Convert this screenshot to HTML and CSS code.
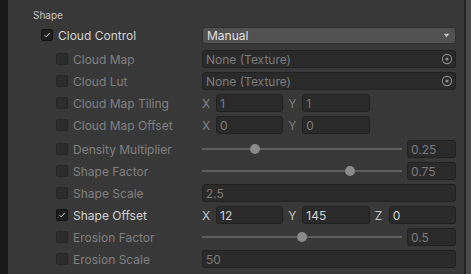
FILE: index.html
```html
<!DOCTYPE html>
<html lang="en">
<head>
  <meta charset="UTF-8" />
  <title>Shape - Inspector</title>
  <link rel="stylesheet" href="styles.css">
</head>
<body>
  <div class="inspector">
    <div class="gutter"></div>

    <div class="content">
      <div class="section-title">Shape</div>

      <div class="row row-top">
        <div class="label">
          <span class="check checked"><svg viewBox="0 0 12 12"><path d="M3 6.2 L5.1 8.3 L9.2 3.6" /></svg></span>
          <span class="name">Cloud Control</span>
        </div>
        <div class="dropdown">
          <span>Manual</span>
          <svg class="arrow" viewBox="0 0 8 6"><path d="M0.5 1 L7.5 1 L4 5 Z" /></svg>
        </div>
      </div>

      <div class="row sub off">
        <div class="label"><span class="check"></span><span class="name">Cloud Map</span></div>
        <div class="field object">
          <span>None (Texture)</span>
          <svg class="picker" viewBox="0 0 12 12"><circle cx="6" cy="6" r="4.6" /><circle class="dot" cx="6" cy="6" r="1.6" /></svg>
        </div>
      </div>

      <div class="row sub off">
        <div class="label"><span class="check"></span><span class="name">Cloud Lut</span></div>
        <div class="field object">
          <span>None (Texture)</span>
          <svg class="picker" viewBox="0 0 12 12"><circle cx="6" cy="6" r="4.6" /><circle class="dot" cx="6" cy="6" r="1.6" /></svg>
        </div>
      </div>

      <div class="row sub off">
        <div class="label"><span class="check"></span><span class="name">Cloud Map Tiling</span></div>
        <div class="vector">
          <div class="comp"><span class="axis">X</span><span class="field">1</span></div>
          <div class="comp"><span class="axis">Y</span><span class="field">1</span></div>
        </div>
      </div>

      <div class="row sub off row-gap">
        <div class="label"><span class="check"></span><span class="name">Cloud Map Offset</span></div>
        <div class="vector">
          <div class="comp"><span class="axis">X</span><span class="field">0</span></div>
          <div class="comp"><span class="axis">Y</span><span class="field">0</span></div>
        </div>
      </div>

      <div class="row sub off">
        <div class="label"><span class="check"></span><span class="name">Density Multiplier</span></div>
        <div class="slider">
          <div class="track"><span class="thumb" style="left: calc((100% - 10px) * 0.25)"></span></div>
          <span class="field num">0.25</span>
        </div>
      </div>

      <div class="row sub off">
        <div class="label"><span class="check"></span><span class="name">Shape Factor</span></div>
        <div class="slider">
          <div class="track"><span class="thumb" style="left: calc((100% - 10px) * 0.75)"></span></div>
          <span class="field num">0.75</span>
        </div>
      </div>

      <div class="row sub off">
        <div class="label"><span class="check"></span><span class="name">Shape Scale</span></div>
        <span class="field">2.5</span>
      </div>

      <div class="row sub">
        <div class="label">
          <span class="check checked"><svg viewBox="0 0 12 12"><path d="M3 6.2 L5.1 8.3 L9.2 3.6" /></svg></span>
          <span class="name">Shape Offset</span>
        </div>
        <div class="vector">
          <div class="comp"><span class="axis">X</span><span class="field">12</span></div>
          <div class="comp"><span class="axis">Y</span><span class="field">145</span></div>
          <div class="comp"><span class="axis">Z</span><span class="field">0</span></div>
        </div>
      </div>

      <div class="row sub off">
        <div class="label"><span class="check"></span><span class="name">Erosion Factor</span></div>
        <div class="slider">
          <div class="track"><span class="thumb" style="left: calc((100% - 10px) * 0.5)"></span></div>
          <span class="field num">0.5</span>
        </div>
      </div>

      <div class="row sub off">
        <div class="label"><span class="check"></span><span class="name">Erosion Scale</span></div>
        <span class="field">50</span>
      </div>
    </div>

    <div class="scrollbar"></div>
  </div>
</body>
</html>
```

FILE: styles.css
```css
* {
  margin: 0;
  padding: 0;
  box-sizing: border-box;
}

body {
  font-family: Inter, 'Noto Sans', sans-serif;
  font-size: 12px;
  color: #d2d2d2;
  background: #383838;
  overflow: hidden;
}

.inspector {
  display: flex;
  width: 471px;
  height: 274px;
}

.gutter {
  width: 8px;
  background: #191919;
}

.content {
  flex: 1;
  padding: 8px 8px 0 0;
}

.scrollbar {
  width: 7px;
  background: #4a4a4a;
  border-left: 2px solid #232323;
}

.section-title {
  font-size: 10px;
  color: #c4c4c4;
  padding-left: 25px;
  height: 14px;
  line-height: 14px;
  margin-bottom: 4px;
}

.row {
  display: flex;
  align-items: center;
  height: 18px;
  margin-bottom: 4px;
}

.row-top {
  margin-bottom: 6px;
}

.row-gap {
  margin-bottom: 6px;
}

.label {
  width: 194px;
  display: flex;
  align-items: center;
  gap: 5px;
  padding-left: 33px;
  white-space: nowrap;
}

.sub .label {
  padding-left: 48px;
}

.off .name {
  color: #808080;
}

.check {
  width: 12px;
  height: 12px;
  border-radius: 2px;
  background: #2c2c2c;
  border: 1px solid #262626;
  display: flex;
  align-items: center;
  justify-content: center;
}

.check.checked {
  background: #1e1e1e;
  border-color: #111111;
}

.check svg {
  width: 12px;
  height: 12px;
}

.check path {
  fill: none;
  stroke: #d2d2d2;
  stroke-width: 1.2;
}

.dropdown {
  flex: 1;
  height: 17px;
  background: #515151;
  border: 1px solid #303030;
  border-radius: 3px;
  display: flex;
  align-items: center;
  justify-content: space-between;
  padding: 0 5px 0 4px;
  color: #e0e0e0;
}

.arrow {
  width: 7px;
  height: 5px;
  fill: #c4c4c4;
}

.field {
  flex: 1;
  height: 18px;
  background: #2a2a2a;
  border: 1px solid #212121;
  border-radius: 3px;
  display: flex;
  align-items: center;
  padding: 0 3px;
  color: #d2d2d2;
  white-space: nowrap;
}

.row.off .field {
  color: #7c7c7c;
}

.object {
  justify-content: space-between;
  padding-right: 2px;
}

.picker {
  width: 12px;
  height: 12px;
}

.picker circle {
  fill: none;
  stroke: #8c8c8c;
  stroke-width: 1.1;
}

.picker .dot {
  fill: #8c8c8c;
  stroke: none;
}

.vector {
  flex: 1;
  display: grid;
  grid-template-columns: repeat(3, 1fr);
  gap: 5px;
}

.comp {
  display: flex;
  align-items: center;
}

.axis {
  width: 14px;
  color: #c4c4c4;
}

.off .axis {
  color: #808080;
}

.slider {
  flex: 1;
  display: flex;
  align-items: center;
  gap: 5px;
}

.track {
  flex: 1;
  height: 2px;
  background: #5e5e5e;
  position: relative;
}

.thumb {
  position: absolute;
  top: -4px;
  width: 10px;
  height: 10px;
  border-radius: 50%;
  background: #8a8a8a;
}

.slider .num {
  flex: 0 0 49px;
}
```
